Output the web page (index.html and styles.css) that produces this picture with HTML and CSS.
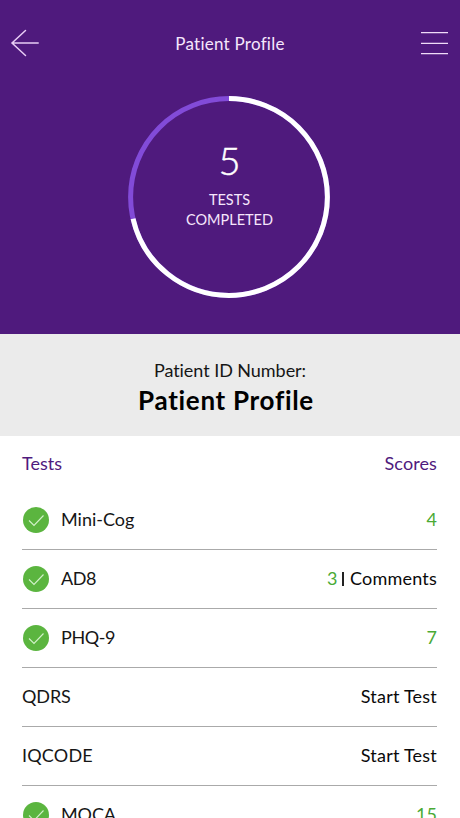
FILE: index.html
```html
<!DOCTYPE html>
<html lang="en">
<head>
<meta charset="utf-8">
<title>Patient Profile</title>
<link rel="stylesheet" href="styles.css">
</head>
<body>
<div class="screen">
  <header class="hero">
    <nav class="bar">
      <svg class="back" width="30" height="30" viewBox="0 0 30 30"><path d="M28.200 15H2M15.500 2.500L2 15l13.500 12.500"/></svg>
      <h1 class="title">Patient Profile</h1>
      <svg class="menu" width="28" height="24" viewBox="0 0 28 24"><path d="M1 1.700H28M1 12.300H28M1 22.600H28"/></svg>
    </nav>
    <div class="ring">
      <svg class="ring-art" width="202" height="202" viewBox="0 0 202 202">
        <circle class="track" cx="101" cy="101" r="98.400"/>
        <circle class="done" cx="101" cy="101" r="98.400" pathLength="7" stroke-dasharray="5 2" transform="rotate(-90 101 101)"/>
      </svg>
      <div class="ring-text">
        <span class="count">5</span>
        <span class="caption tests">TESTS</span>
        <span class="caption completed">COMPLETED</span>
      </div>
    </div>
  </header>
  <section class="patient">
    <p class="label">Patient ID Number:</p>
    <p class="name">Patient Profile</p>
  </section>
  <main class="list">
    <div class="head"><span class="h-tests">Tests</span><span class="h-scores">Scores</span></div>
    <div class="row"><svg class="check" width="26" height="26" viewBox="0 0 26 26"><circle cx="13" cy="13" r="13"/><path d="M6 13.500L11 18.500L20.500 8.500"/></svg><span class="test minicog">Mini-Cog</span><span class="score">4</span></div>
    <div class="row"><svg class="check" width="26" height="26" viewBox="0 0 26 26"><circle cx="13" cy="13" r="13"/><path d="M6 13.500L11 18.500L20.500 8.500"/></svg><span class="test ad8">AD8</span><span class="score">3</span><span class="divider"></span><span class="action comments">Comments</span></div>
    <div class="row"><svg class="check" width="26" height="26" viewBox="0 0 26 26"><circle cx="13" cy="13" r="13"/><path d="M6 13.500L11 18.500L20.500 8.500"/></svg><span class="test phq">PHQ-9</span><span class="score">7</span></div>
    <div class="row"><span class="test qdrs">QDRS</span><span class="action">Start Test</span></div>
    <div class="row"><span class="test iqcode">IQCODE</span><span class="action">Start Test</span></div>
    <div class="row"><svg class="check" width="26" height="26" viewBox="0 0 26 26"><circle cx="13" cy="13" r="13"/><path d="M6 13.500L11 18.500L20.500 8.500"/></svg><span class="test moca">MOCA</span><span class="score">15</span></div>
  </main>
</div>
</body>
</html>
```
FILE: styles.css
```css
* { box-sizing: border-box; margin: 0; padding: 0; }
body { font-family: Lato, "Liberation Sans", sans-serif; background: #fff; color: #161616; }
.screen { width: 460px; height: 818px; overflow: hidden; }
svg { display: block; flex: none; }

.hero { height: 334px; background: #4f1a7d; color: #f6e6fc; padding-top: 23px; }
.bar { height: 40px; padding: 0 12px 0 10px; display: flex; align-items: center; justify-content: space-between; }
.back { fill: none; stroke: #e8cdf5; stroke-width: 1.5; stroke-linecap: round; }
.menu { fill: none; stroke: #f0dcf8; stroke-width: 1.3; }
.title { font-size: 17px; line-height: 24px; font-weight: 400; letter-spacing: .25px; padding-top: 2px; }

.ring { width: 202px; height: 202px; margin: 33px 0 0 128px; display: grid; }
.ring-art, .ring-text { grid-area: 1 / 1; }
.ring circle { fill: none; stroke-width: 5; }
.ring .track { stroke: #824bd8; }
.ring .done { stroke: #fff; }
.ring-text { display: flex; flex-direction: column; align-items: center; padding: 41px 0 0 1px; z-index: 1; }
.count { font-size: 38px; line-height: 46px; font-weight: 300; color: #fff; -webkit-text-stroke: .5px #fff; }
.caption { font-size: 14.5px; line-height: 20px; }
.tests { margin-top: 7px; }

.patient { height: 102px; background: #ebebeb; text-align: center; padding-top: 24px; }
.label { font-size: 18px; line-height: 24px; letter-spacing: -.05px; }
.name { font-size: 26px; line-height: 36px; font-weight: 700; color: #000; letter-spacing: .7px; padding-right: 8px; }

.list { padding: 0 23px 0 22px; font-size: 18px; line-height: 24px; }
.head { height: 55px; padding-bottom: 2px; display: flex; justify-content: space-between; align-items: center; color: #4f1a7d; }
.h-scores { letter-spacing: .1px; }
.row { height: 59px; border-bottom: 1px solid #aaa; display: flex; align-items: center; }
.check { margin: 0 12px 0 1px; }
.check circle { fill: #5bb53f; }
.check path { fill: none; stroke: #d3f2ca; stroke-width: 1.1; }
.test, .score, .action { padding-bottom: 2px; }
.test { margin-right: auto; }
.ad8, .phq { letter-spacing: -.4px; }
.qdrs { letter-spacing: -.1px; }
.iqcode { letter-spacing: .2px; }
.moca { letter-spacing: -.1px; }
.score { color: #4aaa35; }
.divider { width: 1.5px; height: 14px; background: #222; margin: 0 6px 0 5px; }
.action { color: #0a0a0a; letter-spacing: .22px; }
```
